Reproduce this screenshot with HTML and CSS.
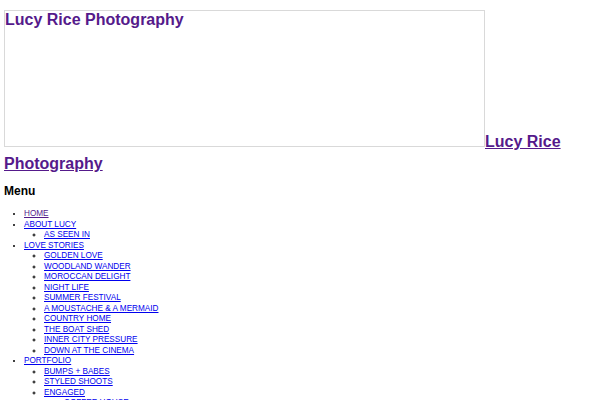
FILE: index.html
```html
<!DOCTYPE html>
<html lang="en">
	<head>
		<meta charset="UTF-8" />
		<meta name="viewport" content="width=device-width, initial-scale=1.0" />
		<title>Lucy Rice Photography</title>
		<link rel="stylesheet" href="styles.css">
	</head>

	<body>
		<header class="site-header">
			<h1 class="site-title">
				<a href="#" class="visited"><span class="logo"><span class="logo-alt">Lucy Rice Photography</span></span>Lucy Rice Photography</a>
			</h1>
		</header>

		<nav class="main-nav">
			<h2 class="nav-title">Menu</h2>
			<ul class="menu">
				<li><a href="#" class="visited">HOME</a></li>
				<li><a href="#">ABOUT LUCY</a>
					<ul>
						<li><a href="#">AS SEEN IN</a></li>
					</ul>
				</li>
				<li><a href="#">LOVE STORIES</a>
					<ul>
						<li><a href="#">GOLDEN LOVE</a></li>
						<li><a href="#">WOODLAND WANDER</a></li>
						<li><a href="#">MOROCCAN DELIGHT</a></li>
						<li><a href="#">NIGHT LIFE</a></li>
						<li><a href="#">SUMMER FESTIVAL</a></li>
						<li><a href="#">A MOUSTACHE &amp; A MERMAID</a></li>
						<li><a href="#">COUNTRY HOME</a></li>
						<li><a href="#">THE BOAT SHED</a></li>
						<li><a href="#">INNER CITY PRESSURE</a></li>
						<li><a href="#">DOWN AT THE CINEMA</a></li>
					</ul>
				</li>
				<li><a href="#">PORTFOLIO</a>
					<ul>
						<li><a href="#">BUMPS + BABES</a></li>
						<li><a href="#">STYLED SHOOTS</a></li>
						<li><a href="#">ENGAGED</a>
							<ul>
								<li><a href="#">COFFEE HOUSE</a></li>
							</ul>
						</li>
					</ul>
				</li>
			</ul>
		</nav>
	</body>
</html>
```

FILE: styles.css
```css
:root {
	--link-color:    #0000ee;
	--visited-color: #551a8b;
	--border-color:  #d9d9d9;
}

html {
	padding: 0;
	margin: 0;
}

body {
	margin: 0;
	padding: 10px 4px 0;
	background: #fff;
	color: #000;
	font-family: "Liberation Sans", Arial, sans-serif;
}

a {
	color: var(--link-color);
}
a.visited {
	color: var(--visited-color);
}

.site-title {
	margin: 0 0 9px 0;
	font-size: 16px;
	line-height: 22px;
	font-weight: bold;
}

.logo {
	display: inline-block;
	width: 479px;
	height: 135px;
	border: 1px solid var(--border-color);
	overflow: hidden;
	vertical-align: baseline;
}
.logo-alt {
	display: block;
	line-height: 18px;
}

.nav-title {
	margin: 0 0 11px 0;
	font-size: 12px;
	line-height: 14px;
	font-weight: bold;
}

.menu,
.menu ul {
	margin: 0;
	padding-left: 20px;
}
.menu {
	font-size: 8.2px;
	line-height: 10.5px;
}
.menu ul {
	list-style-type: circle;
}
.menu ul ul {
	list-style-type: square;
}
```
